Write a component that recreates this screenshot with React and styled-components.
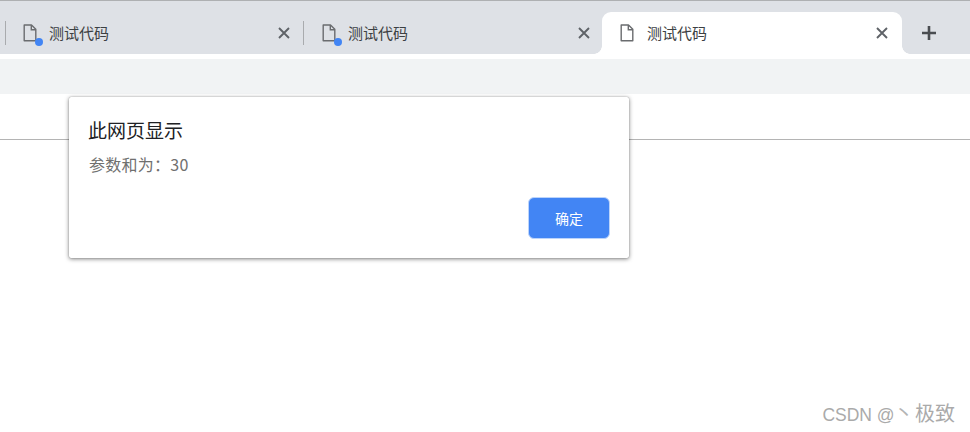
import React from "react";
import styled, { createGlobalStyle } from "styled-components";

const Global = createGlobalStyle`
  html, body { margin: 0; padding: 0; background: #fff; }
  body { width: 970px; height: 432px; overflow: hidden; font-family: "Liberation Sans", "Noto Sans CJK SC", sans-serif; }
`;
const Page = styled.div`position: relative; width: 970px; height: 432px; overflow: hidden; background: #fff;`;
const Strip = styled.div`
  display: flex; align-items: flex-end; height: 53px; background: #dee1e6; border-top: 1px solid #aeb0b2; padding-left: 5px;
`;
const Tab = styled.div`
  position: relative; display: flex; align-items: center; box-sizing: border-box; height: 42px; flex: none;
  width: ${p => p.$width}px;
  padding-left: ${p => p.$left}px;
  padding-right: ${p => p.$right}px;
  background: ${p => (p.$active ? "#fff" : "transparent")};
  border-radius: ${p => (p.$active ? "9px 9px 0 0" : "0")};
  &::before {
    content: ""; display: ${p => (p.$sep ? "block" : "none")}; position: absolute; left: 0; top: 9px; height: 24px; width: 1px; background: #a9abae;
  }
`;
const IconWrap = styled.span`position: relative; display: block; width: 14px; height: 18px; flex: none;`;
const Dot = styled.span`position: absolute; right: -6px; bottom: -4px; width: 8px; height: 8px; border-radius: 50%; background: #4285f4;`;
const Title = styled.span`margin-left: ${p => (p.$active ? "13px" : "12px")}; font-size: 15px; line-height: 20px; color: #3c4043; flex: 1; font-family: "Noto Sans CJK SC", sans-serif;`;
const Close = styled.svg`display: block; width: 12px; height: 12px; flex: none;`;
const Corner = styled.span`
  position: absolute; bottom: 0; width: 8px; height: 8px; background: radial-gradient(circle at ${p => (p.$left ? "0 0" : "100% 0")}, transparent 7.5px, #fff 8px);
  ${p => (p.$left ? "left: -8px;" : "right: -8px;")}
`;
const Plus = styled.svg`display: block; width: 16px; height: 16px; margin: 0 0 13px 19px; flex: none;`;
const Gap = styled.div`height: 5px; background: #fff;`;
const Toolbar = styled.div`height: 35px; background: #f1f3f4;`;
const Content = styled.div`height: 339px; box-sizing: border-box; padding-top: 45px;`;
const Rule = styled.div`height: 1px; background: #b4b4b4;`;
const Dialog = styled.div`
  position: absolute; left: 69px; top: 97px; width: 560px; height: 161px; box-sizing: border-box;
  background: #fff; border-radius: 2px; box-shadow: 0 0 1px rgba(0,0,0,.4), 0 1px 4px rgba(0,0,0,.5);
  padding: 20px 19px 19px 20px; display: flex; flex-direction: column;
`;
const DialogTitle = styled.div`margin-left: -1px; font-size: 19px; line-height: 26px; color: #202124; font-family: "Noto Sans CJK SC", sans-serif;`;
const Message = styled.div`margin-top: 10px; font-size: 16px; line-height: 22px; letter-spacing: 0.25px; color: #70706f; font-family: "Noto Sans CJK SC", sans-serif;`;
const Actions = styled.div`margin-top: auto; display: flex; justify-content: flex-end;`;
const Ok = styled.button`
  width: 82px; height: 42px; box-sizing: border-box; padding: 0; border: 1px solid #bcd4fb; border-radius: 6px; background: #4285f4; color: #fff;
  font-size: 14px; font-family: "Noto Sans CJK SC", sans-serif;
`;
const Watermark = styled.div`
  position: absolute; right: 15px; top: 402px; font-size: 17.5px; line-height: 24px; color: #aaaaaa; white-space: nowrap; font-family: "Liberation Sans", "Noto Sans CJK SC", sans-serif;
`;
const Mark = styled.span`margin-left: -1px; font-size: 20px; letter-spacing: -0.5px; color: #b4b4b4;`;
const Name = styled.span`margin-left: -3px; font-size: 20px;`;

const FileIcon = () => (
  <svg width="14" height="18" viewBox="0 0 14 18" fill="none" stroke="#6a6c6f" strokeWidth="1.4" style={{ display: "block" }}>
    <path d="M1.2 1h7.3l4.3 4.3v11.5H1.2z" strokeLinejoin="round" />
    <path d="M8.3 1v4.7h4.5" />
  </svg>
);
const X = () => (
  <Close viewBox="0 0 12 12" fill="none" stroke="#5f6368" strokeWidth="1.9">
    <path d="M1 1l10 10M11 1L1 11" />
  </Close>
);
const TabItem = ({ active, sep, dot, width, left, right }) => (
  <Tab $active={active} $sep={sep} $width={width} $left={left} $right={right}>
    {active && <Corner $left />}
    {active && <Corner />}
    <IconWrap><FileIcon />{dot && <Dot />}</IconWrap>
    <Title $active={active}>测试代码</Title>
    <X />
  </Tab>
);

export default function App() {
  return (
    <Page>
      <Global />
      <Strip>
        <TabItem sep dot width={298} left={18} right={13} />
        <TabItem sep dot width={299} left={19} right={12} />
        <TabItem active width={300} left={18} right={14} />
        <Plus viewBox="0 0 16 16" fill="none" stroke="#4a4d51" strokeWidth="2.6"><path d="M8 1v14M1 8h14" /></Plus>
      </Strip>
      <Gap />
      <Toolbar />
      <Content><Rule /></Content>
      <Dialog>
        <DialogTitle>此网页显示</DialogTitle>
        <Message>参数和为：30</Message>
        <Actions><Ok>确定</Ok></Actions>
      </Dialog>
      <Watermark>CSDN @<Mark>丶</Mark> <Name>极致</Name></Watermark>
    </Page>
  );
}
